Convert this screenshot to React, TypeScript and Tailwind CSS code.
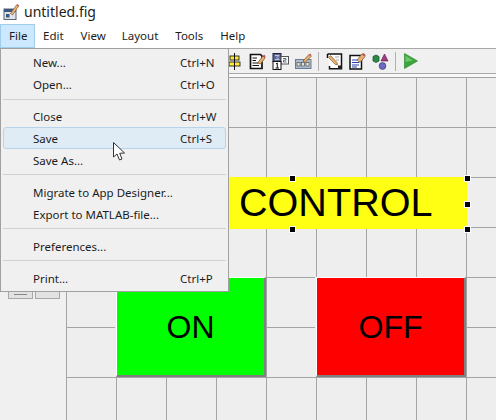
import React from "react";

const Doc = () => (
  <svg width="17" height="17" viewBox="0 0 17 17" className="shrink-0">
    <path d="M1.5 1.5H11.5L13 3V15.5H1.5Z" fill="#fff" stroke="#111" strokeWidth="1.7" />
    <path d="M3.5 5H8M3.5 7.5H7M3.5 10H9M3.5 12.5H10" stroke="#111" strokeWidth="1.1" />
    <path d="M8.5 10L14 3L16 5L11.5 11Z" fill="#e8b070" stroke="#7a5a30" strokeWidth="0.8" />
    <path d="M14 3L15 1.5L16.5 3L16 5Z" fill="#c05050" />
  </svg>
);

const Align = () => (
  <svg width="12" height="17" viewBox="0 0 12 17" className="shrink-0">
    <rect x="1" y="3" width="9" height="4" fill="#ffe93a" stroke="#222" strokeWidth="0.9" />
    <rect x="0" y="9" width="11" height="4" fill="#ffe93a" stroke="#222" strokeWidth="0.9" />
    <path d="M5.5 0V17" stroke="#111" strokeWidth="1" />
  </svg>
);

const TabOrder = () => (
  <svg width="17" height="17" viewBox="0 0 17 17" className="shrink-0">
    <rect x="1" y="0.5" width="8" height="8" fill="#5a6a9a" stroke="#223" />
    <path d="M3 2.5H7L5 4.5L7 6.5H3" fill="none" stroke="#dde" strokeWidth="0.8" />
    <rect x="9" y="3.5" width="7.5" height="7.5" fill="#fff" stroke="#555" />
    <path d="M11 5.5H14V7.2H11.5V9H14.5" fill="none" stroke="#345" strokeWidth="0.8" />
    <rect x="1" y="8.5" width="8" height="8" fill="#fff" stroke="#111" />
    <path d="M4 11L5.3 10V15M3.5 15H7" fill="none" stroke="#111" strokeWidth="1" />
  </svg>
);

const ToolbarEditor = () => (
  <svg width="17" height="17" viewBox="0 0 17 17" className="shrink-0">
    <rect x="0.5" y="6.5" width="15.5" height="9" fill="#aebccd" stroke="#6c7c90" />
    <rect x="2" y="9.5" width="3" height="3.5" fill="#e6e6d0" stroke="#445" strokeWidth="0.6" />
    <rect x="6.5" y="9.5" width="3" height="3.5" fill="#e6e6d0" stroke="#445" strokeWidth="0.6" />
    <rect x="11" y="9.5" width="3" height="3.5" fill="#e6e6d0" stroke="#445" strokeWidth="0.6" />
    <path d="M8 8L14 1.5L16 3.5L10 9.5Z" fill="#e8b070" stroke="#7a5a30" strokeWidth="0.8" />
    <path d="M14 1.5L15 0.5L16.5 2L16 3.5Z" fill="#c05050" />
  </svg>
);

const Editor = () => (
  <svg width="17" height="17" viewBox="0 0 17 17" className="shrink-0">
    <path d="M1.5 1H15.5V15.8H3.5V13" fill="#fff" stroke="#111" strokeWidth="1.5" />
    <path d="M1.5 1V5" stroke="#111" strokeWidth="1.5" />
    <path d="M9 4H13M10 7H13" stroke="#888" strokeWidth="0.8" />
    <path d="M2.5 4.5L4.5 2.5L11 9.5L11.5 12L9 11.2Z" fill="#ecae70" stroke="#8a6a40" strokeWidth="0.8" />
    <rect x="12" y="12.5" width="3.5" height="3.5" fill="#222" />
  </svg>
);

const Inspector = () => (
  <svg width="17" height="17" viewBox="0 0 17 17" className="shrink-0">
    <path d="M1 2.5H12.5V16H1Z" fill="#fff" stroke="#111" strokeWidth="1.5" />
    <path d="M3 7H8M3 9.5H10M3 12H10M3 14H8" stroke="#2a44b0" strokeWidth="1" />
    <path d="M8 7L13 1L16 3.5L11 9.5Z" fill="#eab078" stroke="#7a5a30" strokeWidth="0.8" />
    <path d="M13 1L14.5 0L16.5 2L16 3.5Z" fill="#b05050" />
  </svg>
);

const Browser = () => (
  <svg width="17" height="17" viewBox="0 0 17 17" className="shrink-0">
    <path d="M1 3.5L4 2L7 3.5V8L4 9.5L1 8Z" fill="#2e8a3e" stroke="#143" strokeWidth="0.7" />
    <path d="M12.5 1L16 8H9Z" fill="#a23a8a" stroke="#513" strokeWidth="0.6" />
    <circle cx="10.5" cy="13" r="3.4" fill="#6a6ac4" stroke="#335" strokeWidth="0.6" />
  </svg>
);

const Play = () => (
  <svg width="14" height="16" viewBox="0 0 14 16" className="shrink-0">
    <path d="M0.5 0.5L13.5 8L0.5 15.5Z" fill="#3ca43c" stroke="#2f8a2f" strokeWidth="0.7" />
    <path d="M1.5 2.5L9 7.5L1.5 9Z" fill="#66c866" />
  </svg>
);

const FigIcon = () => (
  <svg width="17" height="16" viewBox="0 0 17 16" className="shrink-0">
    <rect x="2" y="5" width="12" height="10.5" fill="#dfe4ec" stroke="#5a6474" />
    <rect x="2" y="5" width="12" height="3" fill="#3d5680" />
    <rect x="4" y="10" width="3.5" height="3.5" fill="#3d5680" />
    <path d="M8.5 9.5L14.5 1L16.5 2.5L10.5 11Z" fill="#e8b070" stroke="#8a6a40" strokeWidth="0.7" />
    <path d="M14.5 1L15.5 0L17 1.2L16.5 2.5Z" fill="#c05050" />
  </svg>
);

const Cursor = () => (
  <svg width="13" height="19" viewBox="0 0 13 19" className="absolute left-[113px] top-[142px]">
    <path d="M0.5 0.5V15L4 12L6.5 18L9 17L6.7 11.3L11.5 11Z" fill="#fff" stroke="#333" strokeWidth="1" strokeLinejoin="round" />
  </svg>
);

const Handle = ({ cls }: { cls: string }) => (
  <div className={"absolute h-[5px] w-[5px] bg-black outline outline-1 outline-white " + cls} />
);

const Row = ({ label, shortcut, active }: { label: string; shortcut?: string; active?: boolean }) => (
  <div
    className={
      "relative flex h-[22px] items-center justify-between rounded-[3px] border pl-[29px] pt-[2px] " +
      (active ? "border-[#b5d3ea] bg-[#dfebf5]" : "border-transparent")
    }
  >
    <span>{label}</span>
    {shortcut && <span className="w-[45px] whitespace-nowrap">{shortcut}</span>}
  </div>
);

const Sep = ({ first }: { first?: boolean }) => (
  <div className={first ? "h-[10px] pt-[4px]" : "h-[10px] pt-[3px]"}>
    <div className="h-px bg-[#d0d0d0]" />
  </div>
);

export default function App() {
  return (
    <div className="relative flex h-[420px] w-[496px] flex-col overflow-hidden bg-white font-['Noto_Sans',sans-serif] text-[11.5px] leading-none text-[#1c1c1c]">
      <div className="flex h-[23px] items-center gap-[5px] pl-[2px]">
        <FigIcon />
        <span className="text-[14px]">untitled.fig</span>
      </div>
      <div className="flex h-[26px] items-center border-b border-[#a8a8a8] pt-[1px]">
        <div className="flex h-full w-[35px] items-center border border-[#9fcdec] bg-[#cce8ff] pl-[8px]">File</div>
        <span className="ml-[8px]">Edit</span>
        <span className="ml-[17px]">View</span>
        <span className="ml-[16px]">Layout</span>
        <span className="ml-[17px]">Tools</span>
        <span className="ml-[17px]">Help</span>
      </div>
      <div className="flex h-[25px] items-center border-b border-[#a8a8a8] bg-[#f0f0f0] pl-[229px]">
        <Align />
        <div className="ml-[8px]"><Doc /></div>
        <div className="ml-[6px]"><TabOrder /></div>
        <div className="ml-[6px]"><ToolbarEditor /></div>
        <div className="ml-[6px] h-[19px] w-px bg-[#b0b0b0]" />
        <div className="ml-[7px]"><Editor /></div>
        <div className="ml-[6px]"><Inspector /></div>
        <div className="ml-[6px]"><Browser /></div>
        <div className="ml-[6px] h-[19px] w-px bg-[#b0b0b0]" />
        <div className="ml-[8px]"><Play /></div>
      </div>
      <div className="h-[3px] bg-[#f8f8f8]" />
      <div className="flex min-h-0 flex-1">
        <div className="flex w-[66px] items-start gap-[2px] bg-[#f0f0f0] pl-[8px] pt-[200px]">
          <div className="relative h-[22px] w-[25px] border border-[#a8a8a8] bg-[#e2e2e2]">
            <div className="absolute bottom-[3px] left-[5px] h-px w-[13px] bg-[#888]" />
          </div>
          <div className="h-[22px] w-[25px] border border-[#a8a8a8] bg-[#e2e2e2]" />
        </div>
        <div className="relative flex-1 bg-[#eeeeee] bg-[linear-gradient(#a4a4a4_1px,transparent_1px),linear-gradient(90deg,#a4a4a4_1px,transparent_1px)] bg-[size:50px_50px] font-['Liberation_Sans',sans-serif] text-black">
          <div className="absolute left-[51px] top-[100px] flex h-[52px] w-[350px] items-center bg-[#ffff14] pl-[122px] text-[39.6px]">
            CONTROL
          </div>
          <Handle cls="left-[224px] top-[99px]" />
          <Handle cls="left-[399px] top-[99px]" />
          <Handle cls="left-[399px] top-[125px]" />
          <Handle cls="left-[224px] top-[150px]" />
          <Handle cls="left-[399px] top-[150px]" />
          <div className="absolute left-[50px] top-[200px] flex h-[100px] w-[150px] items-center justify-center border-b-2 border-l border-r-2 border-t border-b-[#808080] border-l-white border-r-[#808080] border-t-white bg-[#00ff00] text-[32px] shadow-[-1px_0_0_#eeeeee]">
            ON
          </div>
          <div className="absolute left-[250px] top-[200px] flex h-[100px] w-[150px] items-center justify-center border-b-2 border-l border-r-2 border-t border-b-[#808080] border-l-white border-r-[#808080] border-t-white bg-[#ff0000] text-[32px] shadow-[-1px_0_0_#eeeeee]">
            OFF
          </div>
        </div>
      </div>
      <div className="absolute left-0 top-[48px] h-[244px] w-[229px] border border-[#a0a0a0] bg-[#f0f0f0] p-[2px]">
        <Row label="New..." shortcut="Ctrl+N" />
        <Row label="Open..." shortcut="Ctrl+O" />
        <Sep first />
        <Row label="Close" shortcut="Ctrl+W" />
        <Row label="Save" shortcut="Ctrl+S" active />
        <Row label="Save As..." />
        <Sep />
        <Row label="Migrate to App Designer..." />
        <Row label="Export to MATLAB-file..." />
        <Sep />
        <Row label="Preferences..." />
        <Sep />
        <Row label="Print..." shortcut="Ctrl+P" />
      </div>
      <Cursor />
    </div>
  );
}
